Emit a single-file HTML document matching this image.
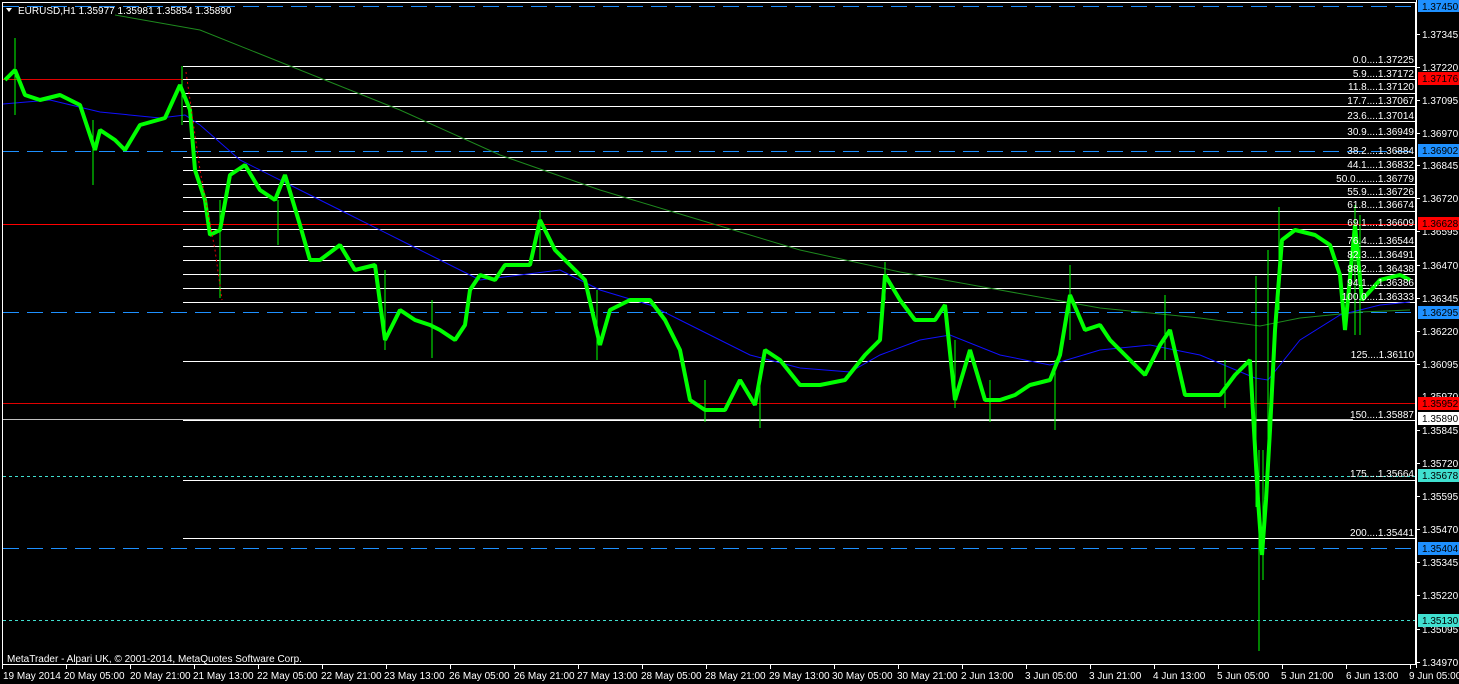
<!DOCTYPE html>
<html><head><meta charset="utf-8"><style>
html,body{margin:0;padding:0;background:#000;width:1459px;height:684px;overflow:hidden}
svg{display:block}
text{font-family:"Liberation Sans",sans-serif;font-size:10px}
</style></head><body>
<svg width="1459" height="684" viewBox="0 0 1459 684" xmlns="http://www.w3.org/2000/svg">
<rect width="1459" height="684" fill="#000"/>
<!-- frame -->
<rect x="2.5" y="2.5" width="1413" height="662" fill="none" stroke="#fff" stroke-width="1"/>
<!-- horizontal level lines -->
<g stroke-width="1" fill="none">
<line x1="3" y1="6.5" x2="1415" y2="6.5" stroke="#1e90ff" stroke-dasharray="16,8"/>
<line x1="3" y1="79.5" x2="183" y2="79.5" stroke="#e00000"/>
<line x1="3" y1="151.5" x2="1415" y2="151.5" stroke="#1e90ff" stroke-dasharray="16,8"/>
<line x1="3" y1="224.5" x2="1415" y2="224.5" stroke="#ff0000"/>
<line x1="3" y1="312.5" x2="1415" y2="312.5" stroke="#1e90ff" stroke-dasharray="16,8"/>
<line x1="3" y1="403.5" x2="1415" y2="403.5" stroke="#e00000"/>
<line x1="3" y1="419.5" x2="1353" y2="419.5" stroke="#c0c0c0"/>
<line x1="3" y1="476.5" x2="1415" y2="476.5" stroke="#40e0d0" stroke-dasharray="3,3"/>
<line x1="3" y1="548.5" x2="1415" y2="548.5" stroke="#1e90ff" stroke-dasharray="16,8"/>
<line x1="3" y1="620.5" x2="1415" y2="620.5" stroke="#40e0d0" stroke-dasharray="3,3"/>
</g>
<!-- fib lines -->
<g stroke="#fff" stroke-width="1">
<line x1="183" y1="66.5" x2="1415" y2="66.5"/>
<line x1="183" y1="79.5" x2="1415" y2="79.5"/>
<line x1="183" y1="93.5" x2="1415" y2="93.5"/>
<line x1="183" y1="106.5" x2="1415" y2="106.5"/>
<line x1="183" y1="121.5" x2="1415" y2="121.5"/>
<line x1="183" y1="138.5" x2="1415" y2="138.5"/>
<line x1="183" y1="157.5" x2="1415" y2="157.5"/>
<line x1="183" y1="170.5" x2="1415" y2="170.5"/>
<line x1="183" y1="184.5" x2="1415" y2="184.5"/>
<line x1="183" y1="197.5" x2="1415" y2="197.5"/>
<line x1="183" y1="211.5" x2="1415" y2="211.5"/>
<line x1="183" y1="229.5" x2="1415" y2="229.5"/>
<line x1="183" y1="246.5" x2="1415" y2="246.5"/>
<line x1="183" y1="260.5" x2="1415" y2="260.5"/>
<line x1="183" y1="274.5" x2="1415" y2="274.5"/>
<line x1="183" y1="288.5" x2="1415" y2="288.5"/>
<line x1="183" y1="302.5" x2="1415" y2="302.5"/>
<line x1="183" y1="361.5" x2="1415" y2="361.5"/>
<line x1="183" y1="420.5" x2="1415" y2="420.5"/>
<line x1="183" y1="480.5" x2="1415" y2="480.5"/>
<line x1="183" y1="538.5" x2="1415" y2="538.5"/>
</g>
<!-- moving averages -->
<polyline fill="none" stroke="#1e8a1e" stroke-width="1" points="115,15 200,30 300,70 400,110 500,155 600,190 700,220 800,250 900,272 1000,290 1100,308 1200,318 1260,326 1300,318 1360,312 1410,310"/>
<polyline fill="none" stroke="#1010ff" stroke-width="1" points="3,104 50,100 100,112 160,118 185,115 200,125 240,160 300,190 350,215 400,240 450,265 480,280 520,275 560,270 600,290 650,305 700,330 750,355 800,368 850,372 880,355 920,340 950,335 1000,355 1050,365 1100,350 1150,345 1200,355 1255,378 1268,380 1300,340 1340,315 1380,305 1410,302"/>
<!-- wicks -->
<g stroke="#00ff00" stroke-width="1">
<line x1="15" y1="38" x2="15" y2="115"/><line x1="93" y1="120" x2="93" y2="185"/>
<line x1="182" y1="66" x2="182" y2="125"/><line x1="220" y1="200" x2="220" y2="298"/>
<line x1="278" y1="200" x2="278" y2="245"/><line x1="385" y1="270" x2="385" y2="350"/>
<line x1="432" y1="300" x2="432" y2="358"/><line x1="540" y1="210" x2="540" y2="260"/>
<line x1="597" y1="290" x2="597" y2="360"/><line x1="705" y1="380" x2="705" y2="422"/>
<line x1="760" y1="380" x2="760" y2="428"/><line x1="885" y1="262" x2="885" y2="300"/>
<line x1="955" y1="340" x2="955" y2="408"/><line x1="990" y1="380" x2="990" y2="422"/>
<line x1="1055" y1="360" x2="1055" y2="430"/><line x1="1070" y1="265" x2="1070" y2="340"/>
<line x1="1165" y1="295" x2="1165" y2="360"/><line x1="1225" y1="360" x2="1225" y2="408"/>
<line x1="1256" y1="276" x2="1256" y2="507"/><line x1="1259" y1="450" x2="1259" y2="651"/>
<line x1="1263" y1="450" x2="1263" y2="580"/><line x1="1268" y1="250" x2="1268" y2="465"/>
<line x1="1279" y1="207" x2="1279" y2="310"/><line x1="1355" y1="205" x2="1355" y2="335"/>
<line x1="1360" y1="215" x2="1360" y2="335"/>
</g>
<!-- price body path -->
<polyline fill="none" stroke="#00ff00" stroke-width="4" stroke-linejoin="bevel" points="5,80 15,70 25,95 40,100 60,95 80,105 95,150 100,130 115,140 125,150 140,125 165,118 180,85 190,110 195,170 205,200 210,235 220,230 230,175 245,165 260,190 275,200 285,175 300,225 310,260 320,260 340,245 355,270 375,265 385,340 400,310 415,320 430,325 440,330 455,340 465,325 470,290 480,275 495,280 505,265 530,265 540,220 555,250 570,265 585,280 600,345 610,310 630,300 650,300 665,320 680,350 690,400 705,410 725,410 740,380 755,405 765,350 780,360 800,385 820,385 845,380 865,355 880,340 885,275 900,300 915,320 935,320 945,305 955,400 970,350 985,400 1000,400 1015,395 1030,385 1050,380 1060,355 1070,295 1085,330 1100,325 1110,340 1130,360 1145,375 1160,345 1170,330 1185,395 1200,395 1220,395 1235,375 1250,360 1258,500 1262,555 1266,500 1270,430 1275,330 1282,240 1295,230 1315,235 1330,245 1340,275 1345,330 1355,225 1362,300 1380,280 1400,275 1410,280"/>
<polyline fill="none" stroke="#e00" stroke-width="1" stroke-dasharray="2,3" points="186,72 200,170 215,250 222,300"/>
<!-- fib labels -->
<g fill="#fff" text-anchor="end">
<text x="1414" y="63">0.0....1.37225</text>
<text x="1414" y="77">5.9....1.37172</text>
<text x="1414" y="90">11.8....1.37120</text>
<text x="1414" y="104">17.7....1.37067</text>
<text x="1414" y="119">23.6....1.37014</text>
<text x="1414" y="135">30.9....1.36949</text>
<text x="1414" y="154">38.2....1.36884</text>
<text x="1414" y="168">44.1....1.36832</text>
<text x="1414" y="182">50.0........1.36779</text>
<text x="1414" y="195">55.9....1.36726</text>
<text x="1414" y="208">61.8....1.36674</text>
<text x="1414" y="226">69.1....1.36609</text>
<text x="1414" y="244">76.4....1.36544</text>
<text x="1414" y="258">82.3....1.36491</text>
<text x="1414" y="272">88.2....1.36438</text>
<text x="1414" y="286">94.1....1.36386</text>
<text x="1414" y="300">100.0....1.36333</text>
<text x="1414" y="358">125....1.36110</text>
<text x="1414" y="418">150....1.35887</text>
<text x="1414" y="477">175....1.35664</text>
<text x="1414" y="536">200....1.35441</text>
</g>
<!-- right axis -->
<line x1="1416.5" y1="0" x2="1416.5" y2="668" stroke="#fff"/>
<g stroke="#fff">
<line x1="1416" y1="34.5" x2="1420" y2="34.5"/><line x1="1416" y1="67.5" x2="1420" y2="67.5"/><line x1="1416" y1="100.5" x2="1420" y2="100.5"/><line x1="1416" y1="133.5" x2="1420" y2="133.5"/><line x1="1416" y1="165.5" x2="1420" y2="165.5"/><line x1="1416" y1="198.5" x2="1420" y2="198.5"/><line x1="1416" y1="231.5" x2="1420" y2="231.5"/><line x1="1416" y1="265.5" x2="1420" y2="265.5"/><line x1="1416" y1="298.5" x2="1420" y2="298.5"/><line x1="1416" y1="331.5" x2="1420" y2="331.5"/><line x1="1416" y1="364.5" x2="1420" y2="364.5"/><line x1="1416" y1="430.5" x2="1420" y2="430.5"/><line x1="1416" y1="463.5" x2="1420" y2="463.5"/><line x1="1416" y1="496.5" x2="1420" y2="496.5"/><line x1="1416" y1="529.5" x2="1420" y2="529.5"/><line x1="1416" y1="562.5" x2="1420" y2="562.5"/><line x1="1416" y1="595.5" x2="1420" y2="595.5"/><line x1="1416" y1="629.5" x2="1420" y2="629.5"/><line x1="1416" y1="662.5" x2="1420" y2="662.5"/>
</g>
<g fill="#fff">
<text x="1422" y="38">1.37345</text><text x="1422" y="71">1.37220</text><text x="1422" y="104">1.37095</text><text x="1422" y="137">1.36970</text><text x="1422" y="169">1.36845</text><text x="1422" y="202">1.36720</text><text x="1422" y="235">1.36595</text><text x="1422" y="269">1.36470</text><text x="1422" y="302">1.36345</text><text x="1422" y="335">1.36220</text><text x="1422" y="368">1.36095</text><text x="1422" y="400">1.35970</text><text x="1422" y="434">1.35845</text><text x="1422" y="467">1.35720</text><text x="1422" y="500">1.35595</text><text x="1422" y="533">1.35470</text><text x="1422" y="566">1.35345</text><text x="1422" y="599">1.35220</text><text x="1422" y="633">1.35095</text><text x="1422" y="666">1.34970</text>
</g>
<!-- price tags -->
<rect x="1418" y="0" width="41" height="12" fill="#1e90ff"/><text x="1422" y="10" fill="#000">1.37450</text>
<rect x="1418" y="72" width="41" height="13" fill="#f00"/><text x="1422" y="82" fill="#000">1.37176</text>
<rect x="1418" y="144" width="41" height="13" fill="#1e90ff"/><text x="1422" y="154" fill="#000">1.36902</text>
<rect x="1418" y="217" width="41" height="13" fill="#f00"/><text x="1422" y="227" fill="#000">1.36628</text>
<rect x="1418" y="306" width="41" height="13" fill="#1e90ff"/><text x="1422" y="316" fill="#000">1.36295</text>
<rect x="1418" y="397" width="41" height="13" fill="#f00"/><text x="1422" y="407" fill="#000">1.35952</text>
<rect x="1418" y="412" width="41" height="13" fill="#fff"/><text x="1422" y="422" fill="#000">1.35890</text>
<rect x="1418" y="469" width="41" height="13" fill="#40e0d0"/><text x="1422" y="479" fill="#000">1.35678</text>
<rect x="1418" y="542" width="41" height="13" fill="#1e90ff"/><text x="1422" y="552" fill="#000">1.35404</text>
<rect x="1418" y="614" width="41" height="13" fill="#40e0d0"/><text x="1422" y="624" fill="#000">1.35130</text>
<!-- header -->
<polygon points="6,8 12,8 9,12" fill="#fff"/>
<text x="18" y="14" fill="#fff">EURUSD,H1  1.35977 1.35981 1.35854 1.35890</text>
<text x="7" y="662" fill="#fff">MetaTrader - Alpari UK, © 2001-2014, MetaQuotes Software Corp.</text>
<!-- bottom axis -->
<g stroke="#fff">
<line x1="2.5" y1="665" x2="2.5" y2="669"/><line x1="66.5" y1="665" x2="66.5" y2="669"/><line x1="130.5" y1="665" x2="130.5" y2="669"/><line x1="194.5" y1="665" x2="194.5" y2="669"/><line x1="258.5" y1="665" x2="258.5" y2="669"/><line x1="322.5" y1="665" x2="322.5" y2="669"/><line x1="386.5" y1="665" x2="386.5" y2="669"/><line x1="450.5" y1="665" x2="450.5" y2="669"/><line x1="514.5" y1="665" x2="514.5" y2="669"/><line x1="578.5" y1="665" x2="578.5" y2="669"/><line x1="642.5" y1="665" x2="642.5" y2="669"/><line x1="706.5" y1="665" x2="706.5" y2="669"/><line x1="770.5" y1="665" x2="770.5" y2="669"/><line x1="834.5" y1="665" x2="834.5" y2="669"/><line x1="898.5" y1="665" x2="898.5" y2="669"/><line x1="962.5" y1="665" x2="962.5" y2="669"/><line x1="1026.5" y1="665" x2="1026.5" y2="669"/><line x1="1090.5" y1="665" x2="1090.5" y2="669"/><line x1="1154.5" y1="665" x2="1154.5" y2="669"/><line x1="1218.5" y1="665" x2="1218.5" y2="669"/><line x1="1282.5" y1="665" x2="1282.5" y2="669"/><line x1="1346.5" y1="665" x2="1346.5" y2="669"/><line x1="1410.5" y1="665" x2="1410.5" y2="669"/>
</g>
<g fill="#fff">
<text x="3" y="679">19 May 2014</text><text x="64" y="679">20 May 05:00</text><text x="130" y="679">20 May 21:00</text><text x="193" y="679">21 May 13:00</text><text x="257" y="679">22 May 05:00</text><text x="321" y="679">22 May 21:00</text><text x="384" y="679">23 May 13:00</text><text x="449" y="679">26 May 05:00</text><text x="514" y="679">26 May 21:00</text><text x="577" y="679">27 May 13:00</text><text x="641" y="679">28 May 05:00</text><text x="705" y="679">28 May 21:00</text><text x="769" y="679">29 May 13:00</text><text x="832" y="679">30 May 05:00</text><text x="897" y="679">30 May 21:00</text><text x="961" y="679">2 Jun 13:00</text><text x="1025" y="679">3 Jun 05:00</text><text x="1089" y="679">3 Jun 21:00</text><text x="1153" y="679">4 Jun 13:00</text><text x="1217" y="679">5 Jun 05:00</text><text x="1281" y="679">5 Jun 21:00</text><text x="1346" y="679">6 Jun 13:00</text><text x="1409" y="679">9 Jun 05:00</text>
</g>
</svg>
</body></html>
